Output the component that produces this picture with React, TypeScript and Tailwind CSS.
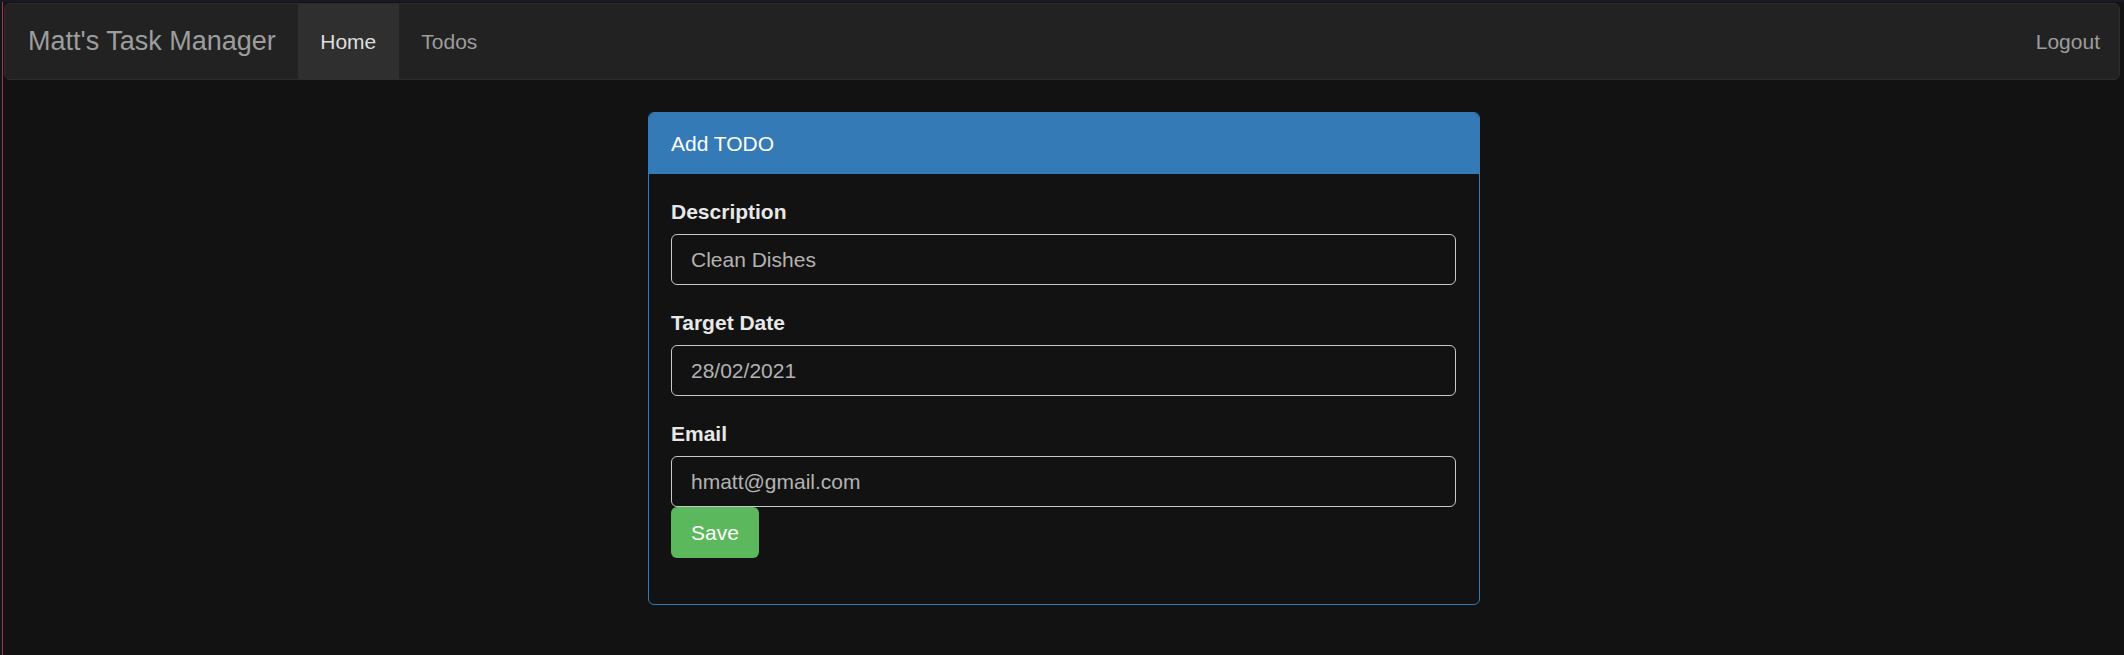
import React from "react";

const fieldCls =
  "block w-full h-[51px] pl-[19px] pr-[18px] bg-[#121212] border border-[#c8c8c8] rounded-[6px] text-[21px] text-[#b3b3b3] outline-none font-['Liberation_Sans',Arial,sans-serif]";

function Field({ label, value, last }: { label: string; value: string; last?: boolean }) {
  return (
    <div className={last ? "" : "mb-[22.5px]"}>
      <label className="block h-[30px] leading-[30px] mb-[7.5px] text-[21px] font-bold text-[#e8e8e8]">
        {label}
      </label>
      <input className={fieldCls} readOnly value={value} />
    </div>
  );
}

export default function App() {
  return (
    <div className="w-full h-[655px] bg-[#121212] flex border-t-[2px] border-[#191926] font-['Liberation_Sans',Arial,sans-serif] overflow-hidden">
      <div className="w-[2px] bg-[#141414]" />
      <div className="w-px bg-[#a8325a]" />
      <div className="flex-1 flex flex-col">
        <div className="pt-px pl-px pr-[4px]">
          <nav className="h-[77px] flex items-stretch bg-[#222222] border border-[#2d2d2d] rounded-[6px] overflow-hidden">
            <a className="flex items-center pl-[23px] pr-[22px] text-[27px] text-[#9d9d9d] whitespace-nowrap">
              Matt's Task Manager
            </a>
            <a className="flex items-center px-[22.5px] text-[21px] text-[#dedede] bg-[#2f2f2f]">Home</a>
            <a className="flex items-center px-[22.5px] text-[21px] text-[#9d9d9d]">Todos</a>
            <a className="ml-auto flex items-center pl-[23px] pr-[19px] text-[21px] text-[#9d9d9d]">Logout</a>
          </nav>
        </div>
        <main className="mt-[32px] flex justify-center">
          <div className="w-[832px] border border-[#337ab7] rounded-[6px] overflow-hidden">
            <div className="h-[61px] bg-[#337ab7] flex items-center px-[22.5px] text-[21px] text-white">
              Add TODO
            </div>
            <div className="px-[22.5px] pt-[22.5px] pb-[46px]">
              <Field label="Description" value="Clean Dishes" />
              <Field label="Target Date" value="28/02/2021" />
              <Field label="Email" value="hmatt@gmail.com" last />
              <button className="h-[51px] px-[20px] bg-[#5cb85c] rounded-[6px] text-[21px] text-white">
                Save
              </button>
            </div>
          </div>
        </main>
      </div>
    </div>
  );
}
